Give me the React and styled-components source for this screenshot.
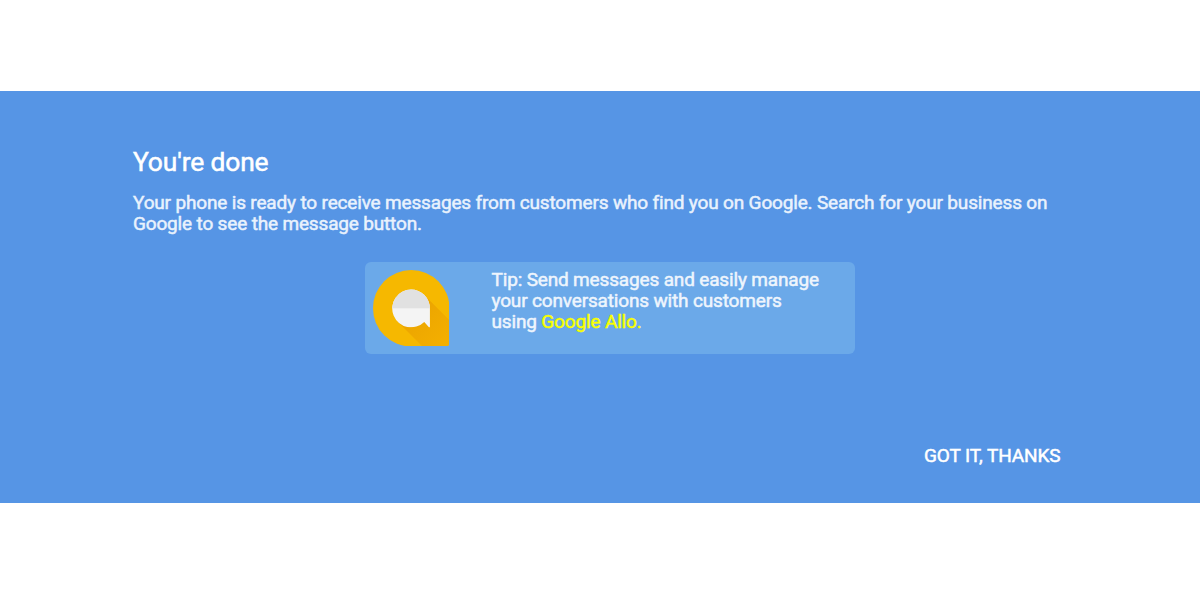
import styled, { createGlobalStyle } from "styled-components"

const GlobalStyle = createGlobalStyle`
    body {
        margin: 0;
        background: #fff;
        font-family: Roboto, "Liberation Sans", sans-serif;
    }
`

const Page = styled.main`
    padding-top: 91px;
`

const Banner = styled.section`
    display: flex;
    flex-direction: column;
    box-sizing: border-box;
    height: 412px;
    padding: 55px 133px 36px;
    background: #5695e5;
    color: #fff;
`

const Title = styled.h1`
    margin: 0;
    font-size: 26.4px;
    font-weight: 400;
    line-height: 32px;
    letter-spacing: -0.14px;
    -webkit-text-stroke: 0.5px currentColor;
`

const Message = styled.p`
    width: 940px;
    margin: 14px 0 0;
    color: #e9f2fd;
    font-size: 19px;
    line-height: 21px;
    letter-spacing: -0.165px;
    -webkit-text-stroke: 0.5px currentColor;
`

const TipCard = styled.div`
    display: flex;
    box-sizing: border-box;
    width: 490px;
    height: 92px;
    margin: 28px 0 0 232px;
    padding: 7px 7.5px;
    border-radius: 6px;
    background: #6ba9e9;
`

const TipText = styled.p`
    width: 340px;
    margin: 0 0 0 42.5px;
    color: #eef5fd;
    font-size: 19px;
    line-height: 21px;
    letter-spacing: -0.16px;
    -webkit-text-stroke: 0.5px currentColor;
`

const AppLink = styled.span`
    color: #f8ff00;
`

const DismissButton = styled.button`
    align-self: flex-end;
    margin: auto 6.5px 0 0;
    padding: 0;
    border: 0;
    background: none;
    color: #fff;
    font-family: inherit;
    font-size: 19px;
    line-height: 22px;
    letter-spacing: -0.1px;
    text-transform: uppercase;
    cursor: pointer;
    -webkit-text-stroke: 0.5px currentColor;
`

const Logo = styled.svg`
    flex: none;
    width: 76.5px;
    height: 76.5px;
    margin-top: 0.5px;
`

const DROP = "M38.5 0A38.5 38.5 0 0 1 77 38.5V73a4 4 0 0 1-4 4H38.5A38.5 38.5 0 0 1 38.5 0Z"
const BUBBLE = "M38.3 19.7A19 19 0 0 1 57.3 38.7V57.2Q57.1 58.2 56.3 57.5L51.6 52.3A19 19 0 1 1 38.3 19.7Z"

const AlloLogo = () => {
  return (
    <Logo viewBox="0 0 77 77" aria-hidden="true">
        <defs>
            <linearGradient id="shadow" gradientUnits="userSpaceOnUse" x1="40" y1="40" x2="77" y2="77">
                <stop offset="0" stopColor="#e89f00" stopOpacity="0.8" />
                <stop offset="1" stopColor="#f3aa00" stopOpacity="0.6" />
            </linearGradient>
            <clipPath id="drop"><path d={DROP} /></clipPath>
            <clipPath id="bubble"><path d={BUBBLE} /></clipPath>
        </defs>
        <path d={DROP} fill="#f6b800" />
        <g clipPath="url(#drop)">
            <path d="M51.8 25.4L90 63.6V90H62.8L24.9 52.1Z" fill="url(#shadow)" />
        </g>
        <g clipPath="url(#bubble)">
            <rect x="19" y="19" width="39" height="40" fill="#f4f4f4" />
            <rect x="19" y="19" width="39" height="19.6" fill="#e1e1e1" />
        </g>
    </Logo>
  )
}

const App = () => {
  return (
    <Page>
        <GlobalStyle />
        <Banner>
            <Title>You're done</Title>
            <Message>
                Your phone is ready to receive messages from customers who find you on Google. Search for your business on<br />
                Google to see the message button.
            </Message>
            <TipCard>
                <AlloLogo />
                <TipText>
                    Tip: Send messages and easily manage<br />
                    your conversations with customers<br />
                    using <AppLink>Google Allo.</AppLink>
                </TipText>
            </TipCard>
            <DismissButton>Got it, thanks</DismissButton>
        </Banner>
    </Page>
  )
}

export default App
